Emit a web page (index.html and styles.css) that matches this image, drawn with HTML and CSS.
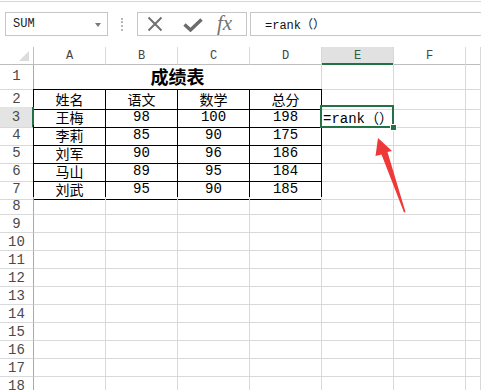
FILE: index.html
```html
<!DOCTYPE html>
<html>
<head>
<meta charset="utf-8">
<link rel="stylesheet" href="styles.css">
</head>
<body>
<div class="app">
  <div class="toolbar">
    <div class="namebox"><span class="name">SUM</span><span class="caret"></span></div>
    <div class="grip"></div>
    <div class="fxbox">
      <svg class="ico-x" width="16" height="16" viewBox="0 0 16 16"><path d="M1.5 1.5 L14.5 14.5 M14.5 1.5 L1.5 14.5" stroke="#707070" stroke-width="2" fill="none"/></svg>
      <svg class="ico-ok" width="20" height="14" viewBox="0 0 20 14"><path d="M1.5 6.5 L7.5 12 L18.5 1.5" stroke="#6b6b6b" stroke-width="3.4" fill="none"/></svg>
      <span class="fx">fx</span>
    </div>
    <div class="formula">=rank（）</div>
  </div>

  <div class="sheet">
    <div class="row head">
      <div class="corner"><span class="tri"></span></div>
      <div>A</div><div>B</div><div>C</div><div>D</div><div class="sel">E</div><div>F</div><div></div>
    </div>
    <div class="row r1">
      <div class="rh">1</div>
      <div class="title">成绩表</div><div></div><div></div><div></div>
    </div>
    <div class="row">
      <div class="rh tb">2</div>
      <div class="t">姓名</div><div class="t">语文</div><div class="t">数学</div><div class="t">总分</div><div></div><div></div><div></div>
    </div>
    <div class="row">
      <div class="rh on">3</div>
      <div class="t">王梅</div><div class="t">98</div><div class="t">100</div><div class="t">198</div><div class="cur"><span>=rank（）</span></div><div></div><div></div>
    </div>
    <div class="row">
      <div class="rh tb">4</div>
      <div class="t">李莉</div><div class="t">85</div><div class="t">90</div><div class="t">175</div><div></div><div></div><div></div>
    </div>
    <div class="row">
      <div class="rh tb">5</div>
      <div class="t">刘军</div><div class="t">90</div><div class="t">96</div><div class="t">186</div><div></div><div></div><div></div>
    </div>
    <div class="row">
      <div class="rh tb">6</div>
      <div class="t">马山</div><div class="t">89</div><div class="t">95</div><div class="t">184</div><div></div><div></div><div></div>
    </div>
    <div class="row">
      <div class="rh tb">7</div>
      <div class="t">刘武</div><div class="t">95</div><div class="t">90</div><div class="t">185</div><div></div><div></div><div></div>
    </div>
    <div class="row"><div class="rh">8</div><div></div><div></div><div></div><div></div><div></div><div></div><div></div></div>
    <div class="row"><div class="rh">9</div><div></div><div></div><div></div><div></div><div></div><div></div><div></div></div>
    <div class="row"><div class="rh">10</div><div></div><div></div><div></div><div></div><div></div><div></div><div></div></div>
    <div class="row"><div class="rh">11</div><div></div><div></div><div></div><div></div><div></div><div></div><div></div></div>
    <div class="row"><div class="rh">12</div><div></div><div></div><div></div><div></div><div></div><div></div><div></div></div>
    <div class="row"><div class="rh">13</div><div></div><div></div><div></div><div></div><div></div><div></div><div></div></div>
    <div class="row"><div class="rh">14</div><div></div><div></div><div></div><div></div><div></div><div></div><div></div></div>
    <div class="row"><div class="rh">15</div><div></div><div></div><div></div><div></div><div></div><div></div><div></div></div>
    <div class="row"><div class="rh">16</div><div></div><div></div><div></div><div></div><div></div><div></div><div></div></div>
    <div class="row"><div class="rh">17</div><div></div><div></div><div></div><div></div><div></div><div></div><div></div></div>
    <div class="row"><div class="rh">18</div><div></div><div></div><div></div><div></div><div></div><div></div><div></div></div>
  </div>

  <svg class="arrow" width="481" height="390" viewBox="0 0 481 390">
    <polygon points="378,138 392,151 387.5,152 405.5,212 404,212.5 381.5,154.5 375.5,156" fill="#ef3838"/>
  </svg>
</div>
</body>
</html>
```

FILE: styles.css
```css
html, body {
  margin: 0;
  padding: 0;
  background: #fff;
}
.app {
  position: relative;
  width: 481px;
  height: 390px;
  overflow: hidden;
  font-family: "Liberation Mono", "Noto Sans CJK SC", monospace;
  color: #000;
}

/* ---------- formula bar ---------- */
.toolbar {
  margin-top: 1px;
  height: 46px;
  box-sizing: border-box;
  border-top: 1px solid #d6d6d6;
  padding: 10px 0 0 5px;
  display: flex;
  align-items: flex-start;
}
.namebox {
  width: 103px;
  height: 24px;
  box-sizing: border-box;
  border: 1px solid #c6c6c6;
  display: flex;
  align-items: center;
  justify-content: space-between;
  padding: 0 6px 0 7px;
  font-size: 12px;
  color: #222;
}
.caret {
  width: 0;
  height: 0;
  border-left: 3.5px solid transparent;
  border-right: 3.5px solid transparent;
  border-top: 4px solid #7a7a7a;
  margin-top: 1px;
}
.grip {
  margin-left: 13px;
  margin-top: 6px;
  width: 0;
  height: 13px;
  border-left: 2px dotted #b8b8b8;
}
.fxbox {
  margin-left: 14px;
  width: 110px;
  height: 24px;
  box-sizing: border-box;
  border: 1px solid #c6c6c6;
  display: flex;
  align-items: center;
  padding-left: 9px;
}
.ico-x { display: block; margin-top: 0; }
.ico-ok { display: block; margin-left: 20px; margin-top: 2px; }
.fx {
  margin-left: 14px;
  font-family: "Liberation Serif", serif;
  font-style: italic;
  font-size: 21px;
  color: #727272;
  line-height: 1;
  margin-top: -1px;
}
.formula {
  margin-left: 3px;
  flex: 1;
  height: 24px;
  box-sizing: border-box;
  border: 1px solid #c6c6c6;
  margin-right: -2px;
  display: flex;
  align-items: center;
  padding-left: 14px;
  font-size: 12px;
  color: #111;
}

/* ---------- sheet ---------- */
.row {
  display: grid;
  grid-template-columns: 34px repeat(6, 72px) 1fr;
  height: 18px;
}
.row > div {
  box-sizing: border-box;
  border-right: 1px solid #d9d9d9;
  border-bottom: 1px solid #d9d9d9;
  display: flex;
  align-items: center;
  justify-content: center;
  font-size: 14px;
  white-space: nowrap;
}
.row.head { height: 16px; }
.row.head > div {
  font-size: 12px;
  color: #444;
  border-bottom-color: #bdbdbd;
  padding-top: 1px;
}
.row.head > .sel {
  background: #e1e1e1;
  border-bottom: 2px solid #217346;
  color: #2c5f43;
  padding-top: 2px;
}
.corner {
  position: relative;
  border-right-color: #bdbdbd !important;
}
.tri {
  position: absolute;
  right: 4px;
  bottom: 3px;
  width: 0;
  height: 0;
  border-left: 10px solid transparent;
  border-bottom: 10px solid #dcdcdc;
}
.row.r1 { height: 26px; }
.row > .title {
  grid-column: span 4;
  font-family: "Noto Sans CJK SC", sans-serif;
  font-weight: bold;
  font-size: 18px;
  border-bottom: 1px solid #000;
}
.row > .rh {
  color: #4a4a4a;
  border-right-color: #a9a9a9;
  font-size: 14px;
}
.row > .rh.tb { border-right-color: #000; }
.row > .rh.on {
  background: #e4e4e4;
  border-right: 2px solid #217346;
}
.row > .t {
  border-right-color: #000;
  border-bottom-color: #000;
}
.row > .cur {
  position: relative;
  justify-content: flex-start;
  padding-left: 1px;
}
.cur::before {
  content: "";
  position: absolute;
  top: -2px;
  left: -2px;
  right: -1px;
  bottom: -1px;
  border: 2px solid #217346;
}
.cur::after {
  content: "";
  position: absolute;
  right: -4px;
  bottom: -4px;
  width: 5px;
  height: 5px;
  background: #217346;
  border: 1px solid #fff;
}
.cur span { position: relative; }

.arrow {
  position: absolute;
  left: 0;
  top: 0;
  pointer-events: none;
}
```
